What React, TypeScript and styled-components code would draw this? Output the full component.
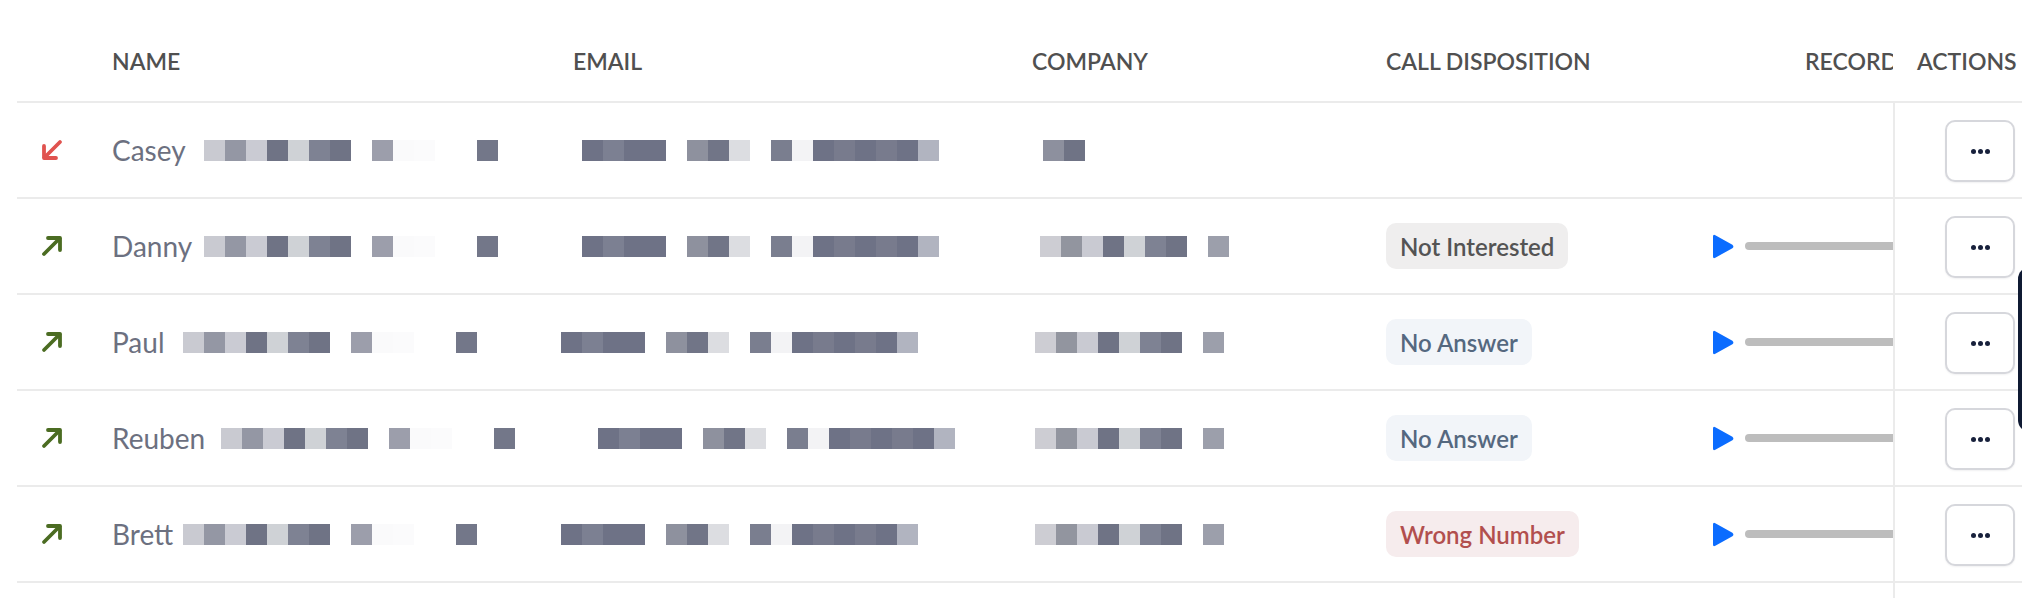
import React from "react";
import styled, { createGlobalStyle } from "styled-components";

type Shade = string | null;
type Disposition = "none" | "neutral" | "info" | "danger";

// pixelated redaction shades, one 21px square each
const NAME_BLOCKS: Shade[] = [
	"#c9cad1", "#9497a4", "#cacbd3", "#6f7385", "#cfd2d6", "#7e8293", "#6f7385",
	null, "#9c9eab", "#fafafb", "#fbfbfc", null, null, "#737789",
];

const EMAIL_BLOCKS: Shade[] = [
	"#6e7286", "#7c8092", "#6e7286", "#6e7286", null, "#8e919e", "#717587", "#dcdde1",
	null, "#7a7e8f", "#f3f3f5", "#6e7286", "#787b8d", "#6e7286", "#787b8d", "#6e7286", "#b1b4c0",
];

const COMPANY_BLOCKS: Shade[] = [
	"#cdcdd3", "#92959f", "#c9cad2", "#6f7385", "#cfd2d6", "#7e8293", "#6f7385", null, "#9c9fab",
];

const COMPANY_SHORT: Shade[] = ["#8d909e", "#6f7385"];

const rows = [
	{ key: 0, name: "Casey", inbound: true, nameWidth: 92, emailOffset: 9, companyOffset: 11, company: COMPANY_SHORT, disposition: "none" as Disposition, label: "" },
	{ key: 1, name: "Danny", inbound: false, nameWidth: 92, emailOffset: 9, companyOffset: 8, company: COMPANY_BLOCKS, disposition: "neutral" as Disposition, label: "Not Interested" },
	{ key: 2, name: "Paul", inbound: false, nameWidth: 71, emailOffset: -12, companyOffset: 3, company: COMPANY_BLOCKS, disposition: "info" as Disposition, label: "No Answer" },
	{ key: 3, name: "Reuben", inbound: false, nameWidth: 109, emailOffset: 25, companyOffset: 3, company: COMPANY_BLOCKS, disposition: "info" as Disposition, label: "No Answer" },
	{ key: 4, name: "Brett", inbound: false, nameWidth: 71, emailOffset: -12, companyOffset: 3, company: COMPANY_BLOCKS, disposition: "danger" as Disposition, label: "Wrong Number" },
];

const badgeColors: Record<Disposition, { bg: string; fg: string }> = {
	none: { bg: "transparent", fg: "transparent" },
	neutral: { bg: "#efeeee", fg: "#545454" },
	info: { bg: "#f2f5f9", fg: "#55687f" },
	danger: { bg: "#f6eced", fg: "#b24f4e" },
};

function Mosaic({ blocks, offset }: { blocks: Shade[]; offset: number }) {
	return (
		<MosaicRow $offset={offset}>
			{blocks.map((b, i) => (
				<Block key={i} $shade={b} />
			))}
		</MosaicRow>
	);
}

function DirectionIcon({ inbound }: { inbound: boolean }) {
	if (inbound) {
		return (
			<svg width="24" height="24" viewBox="0 0 24 24" fill="none">
				<path d="M20 4 L4.5 19.5" stroke="#e0534f" strokeWidth="3.8" strokeLinecap="round" />
				<path d="M4 8 V20 H16" stroke="#e0534f" strokeWidth="3.8" strokeLinecap="round" strokeLinejoin="round" />
			</svg>
		);
	}
	return (
		<svg width="24" height="24" viewBox="0 0 24 24" fill="none">
			<path d="M4 20 L19.5 4.5" stroke="#4b6c22" strokeWidth="3.8" strokeLinecap="round" />
			<path d="M8 4 H20 V16" stroke="#4b6c22" strokeWidth="3.8" strokeLinecap="round" strokeLinejoin="round" />
		</svg>
	);
}

function PlayIcon() {
	return (
		<PlayWrap>
			<svg width="24" height="27" viewBox="0 0 24 27">
				<path d="M2 3.6 Q2 1 4.3 2.3 L21.4 11.7 Q23.4 13.5 21.4 15.3 L4.3 24.7 Q2 26 2 23.4 Z" fill="#0b6cff" />
			</svg>
		</PlayWrap>
	);
}

export default function App() {
	return (
		<Page>
			<GlobalStyle />
			<Table>
				<HeaderRow>
					<HeaderCell />
					<HeaderCell>Name</HeaderCell>
					<HeaderCell>Email</HeaderCell>
					<HeaderCell>Company</HeaderCell>
					<HeaderCell>Call Disposition</HeaderCell>
					<HeaderCell $pad={94}>Recording</HeaderCell>
					<HeaderCell $pad={24}>Actions</HeaderCell>
				</HeaderRow>
				{rows.map((r) => (
					<BodyRow key={r.key}>
						<IconCell>
							<DirectionIcon inbound={r.inbound} />
						</IconCell>
						<Cell>
							<NameText $w={r.nameWidth}>{r.name}</NameText>
							<Mosaic blocks={NAME_BLOCKS} offset={0} />
						</Cell>
						<Cell>
							<Mosaic blocks={EMAIL_BLOCKS} offset={r.emailOffset} />
						</Cell>
						<Cell>
							<Mosaic blocks={r.company} offset={r.companyOffset} />
						</Cell>
						<Cell>
							{r.disposition !== "none" && <Badge $kind={r.disposition}>{r.label}</Badge>}
						</Cell>
						<RecordCell>
							{r.disposition !== "none" && (
								<>
									<PlayIcon />
									<Track />
								</>
							)}
						</RecordCell>
						<ActionCell>
							<MoreButton>
								<Dot />
								<Dot />
								<Dot />
							</MoreButton>
						</ActionCell>
					</BodyRow>
				))}
				<BodyRow>
					<IconCell />
					<Cell />
					<Cell />
					<Cell />
					<Cell />
					<RecordCell />
					<ActionCell />
				</BodyRow>
			</Table>
			<SideWidget />
		</Page>
	);
}

const GlobalStyle = createGlobalStyle`
	html, body {
		margin: 0;
		padding: 0;
		background: #ffffff;
	}
	body {
		font-family: Lato, "Liberation Sans", sans-serif;
	}
`;

const COLUMNS = "95px 461px 459px 354px 325px 182px 129px";

const Page = styled.div`
	position: relative;
	width: 2022px;
	height: 598px;
	overflow: hidden;
	padding-left: 17px;
	box-sizing: border-box;
`;

const Table = styled.div`
	display: flex;
	flex-direction: column;
`;

const HeaderRow = styled.div`
	display: grid;
	grid-template-columns: ${COLUMNS};
	align-items: center;
	height: 103px;
	padding-top: 21px;
	box-sizing: border-box;
	border-bottom: 2px solid #ebebeb;
`;

const HeaderCell = styled.div<{ $pad?: number }>`
	padding-left: ${(p) => p.$pad ?? 0}px;
	font-size: 23px;
	font-weight: 600;
	color: #505050;
	text-transform: uppercase;
	white-space: nowrap;
	overflow: hidden;
`;

const BodyRow = styled.div`
	display: grid;
	grid-template-columns: ${COLUMNS};
	height: 96px;
	box-sizing: border-box;
	border-bottom: 2px solid #ebebeb;
`;

const Cell = styled.div`
	display: flex;
	align-items: center;
	min-width: 0;
`;

const IconCell = styled(Cell)`
	padding-left: 23px;
`;

const RecordCell = styled(Cell)`
	padding-left: 0;
	overflow: hidden;
`;

const ActionCell = styled(Cell)`
	border-left: 2px solid #ebebeb;
	padding-left: 50px;
	margin-bottom: -2px;
`;

const NameText = styled.span<{ $w: number }>`
	flex: 0 0 ${(p) => p.$w}px;
	font-size: 28px;
	font-weight: 400;
	color: #6c7080;
	white-space: nowrap;
`;

const MosaicRow = styled.div<{ $offset: number }>`
	display: flex;
	flex-shrink: 0;
	margin-left: ${(p) => p.$offset}px;
`;

const Block = styled.div<{ $shade: Shade }>`
	width: 21px;
	height: 21px;
	background: ${(p) => p.$shade ?? "transparent"};
`;

const Badge = styled.span<{ $kind: Disposition }>`
	display: inline-flex;
	align-items: center;
	height: 46px;
	padding: 0 14px;
	border-radius: 10px;
	font-size: 24px;
	font-weight: 600;
	background: ${(p) => badgeColors[p.$kind].bg};
	color: ${(p) => badgeColors[p.$kind].fg};
	white-space: nowrap;
`;

const PlayWrap = styled.span`
	display: flex;
	flex-shrink: 0;
`;

const Track = styled.div`
	flex: 0 0 300px;
	height: 8px;
	margin-left: 10px;
	border-radius: 4px;
	background: #bdbdbd;
`;

const MoreButton = styled.button`
	display: flex;
	align-items: center;
	justify-content: center;
	gap: 2px;
	width: 70px;
	height: 62px;
	padding: 0;
	border: 2px solid #d6d7dc;
	border-radius: 10px;
	background: #ffffff;
	box-shadow: 0 1px 2px rgba(16, 24, 40, 0.06);
	cursor: pointer;
`;

const Dot = styled.span`
	width: 5px;
	height: 5px;
	border-radius: 50%;
	background: #18213c;
`;

const SideWidget = styled.div`
	position: absolute;
	left: 2018px;
	top: 267px;
	width: 40px;
	height: 165px;
	border-radius: 12px 0 0 12px;
	background: #0f1a33;
`;
